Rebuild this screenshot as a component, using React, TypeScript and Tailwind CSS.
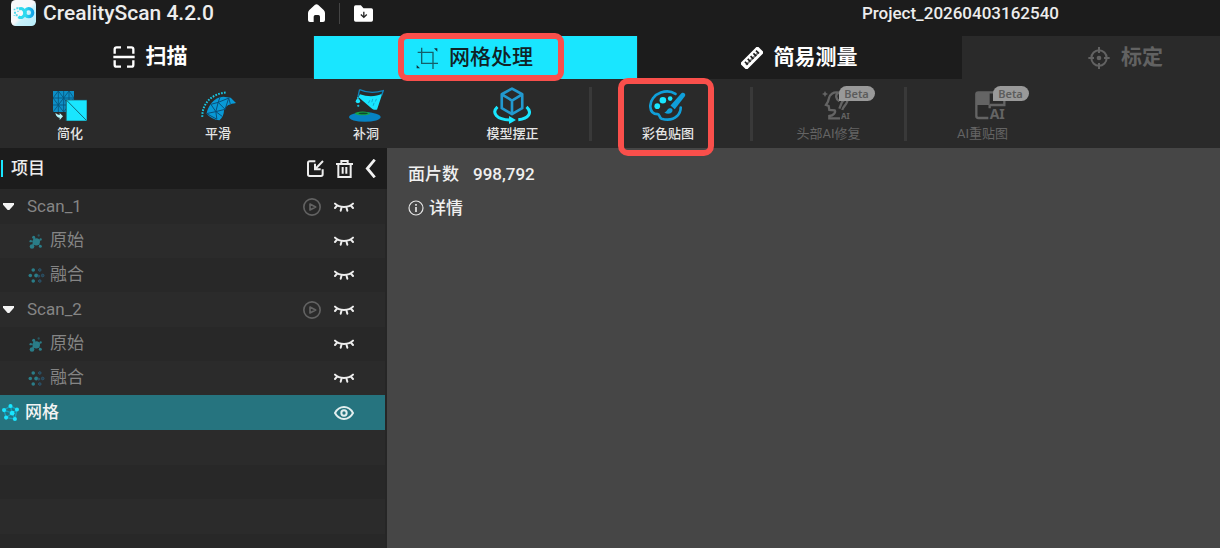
import type { ReactNode } from 'react';

const ScanIcon = () => (
  <svg viewBox="0 0 64 66" className="h-[22px] w-[22px]" fill="none" stroke="currentColor" strokeWidth="7" aria-hidden="true">
    <path d="M4 23V10q0-6 6-6h13M41 4h13q6 0 6 6v13M4 43v13q0 6 6 6h13M41 62h13q6 0 6-6V43M0 33h64" />
  </svg>
);

const CropIcon = () => (
  <svg viewBox="0 0 66 66" className="h-[22px] w-[22px]" fill="none" stroke="#14606b" strokeWidth="4" aria-hidden="true">
    <path d="M17 2v47h49M5 16h46v50" />
    <path d="M54 4h10v10zM2 54v10h10z" fill="#12303a" stroke="none" />
  </svg>
);

const RulerIcon = () => (
  <svg viewBox="0 0 66 66" className="h-[22px] w-[22px]" aria-hidden="true">
    <g transform="rotate(-45 33 33)">
      <rect x="-4" y="19" width="74" height="28" rx="4" fill="currentColor" />
      <path d="M6 32h54v6H6z" fill="#777" />
      <path d="M10 26v12M22 26v12M34 26v12M46 26v12M57 26v12" stroke="#1c1c1c" strokeWidth="5" />
    </g>
  </svg>
);

const TargetIcon = () => (
  <svg viewBox="0 0 64 66" className="h-[22px] w-[22px]" fill="none" stroke="currentColor" strokeWidth="6" aria-hidden="true">
    <circle cx="32" cy="33" r="23" />
    <path d="M32 0v18M32 48v18M0 33h17M47 33h17" strokeWidth="6" />
    <circle cx="32" cy="33" r="7" fill="currentColor" stroke="none" />
  </svg>
);

const SimplifyIcon = () => (
  <svg viewBox="0 0 102 90" className="h-[30px] w-[34px]" aria-hidden="true">
    <rect width="63" height="63" fill="#0d8fc6" />
    <path
      d="M0 21h63M0 42h63M16 0 0 21l16 21L0 63M16 0l16 21-16 21 16 21M48 0 32 21l16 21-16 21M48 0l15 21-15 21 15 21M16 0v63M48 0v63M32 0v63"
      fill="none"
      stroke="#07567c"
      strokeWidth="2.5"
    />
    <rect x="38" y="26" width="64" height="64" fill="#23505c" />
    <rect x="41" y="28" width="60" height="61" fill="#19e6ff" />
    <path d="M41 28l60 61" stroke="#146b7a" strokeWidth="3" />
    <path d="M7 66c2 10 7 14 13 14v7l10-11-10-10v6c-4 0-7-2-13-6z" fill="#b4f5fb" />
  </svg>
);

const SmoothIcon = () => (
  <svg viewBox="0 0 106 90" className="h-[30px] w-[35px]" fill="none" aria-hidden="true">
    <path d="M4 78C3 38 32 7 78 4" stroke="#19c9e6" strokeWidth="6" strokeDasharray="5 4" />
    <path d="M17 68C20 48 38 18 68 17l22 3 16 16c-18 3-31 7-36 21-1 15-5 24-14 31-14 0-30-8-39-20z" fill="#0899d6" />
    <path d="M17 68l28-6 28-7M30 40l15 22 3 23M30 40l22-6 32-13M52 34l-7 28M52 34l21 21M52 34l6-17M84 21l-11 34M84 21l5 19M45 62l20 15M17 68l31 17" stroke="#0a4e78" strokeWidth="3" />
  </svg>
);

const FillHoleIcon = () => (
  <svg viewBox="0 0 106 100" className="h-[33px] w-[35px]" aria-hidden="true">
    <ellipse cx="48" cy="85" rx="48" ry="14.500" fill="#0683c3" />
    <ellipse cx="41" cy="74" rx="23" ry="5.500" fill="#15a64a" />
    <ellipse cx="43" cy="74" rx="14" ry="2.500" fill="#0d4b2c" />
    <path d="M33 16c24 8 48 8 68-2L85 62c-6 3-12 0-17-4L29 25z" fill="#19e6ff" />
    <path d="M32 2c22 10 46 11 72 3l-5 14M32 2l-5 22" fill="none" stroke="#0f84bb" strokeWidth="4" />
    <path d="M63 34l-4 9M72 30l-3 10M76 42l-3 9M83 30l-3 8" stroke="#0c9fc6" strokeWidth="2.500" />
    <circle cx="27" cy="37" r="6.500" fill="#19e6ff" />
    <circle cx="28" cy="51" r="3.500" fill="#19b6d2" />
    <path d="M27 24v12" stroke="#19e6ff" strokeWidth="4" />
  </svg>
);

const AlignIcon = () => (
  <svg viewBox="0 0 114 112" className="h-[37px] w-[38px]" fill="none" aria-hidden="true">
    <path d="M57 5l31 17v42L57 82 26 64V22zM26 22l31 19 31-19M57 41v41" stroke="#2299cf" strokeWidth="8" strokeLinejoin="round" />
    <path d="M13 60C-6 78 10 98 50 100M101 60c19 18 6 36-25 39" stroke="#19e6ff" strokeWidth="9" />
    <path d="M48 88l21 12-21 12z" fill="#19e6ff" />
  </svg>
);

const PaletteIcon = () => (
  <svg viewBox="0 0 112 92" className="h-[31px] w-[37px]" fill="none" strokeLinecap="round" aria-hidden="true">
    <path d="M80 11C68 3 50 2 36 7 16 14 3 31 4 50c1 14 9 22 22 22 7 0 4 11 12 14 17 5 36 2 47-8 8-8 11-16 11-26" stroke="#109fd9" strokeWidth="8" />
    <path d="M98 9c8-5 15 3 10 10L78 57l-13-11z" fill="#109fd9" />
    <path d="M71 58c2 11-12 17-25 9 8-1 8-9 14-12 4-2 9-1 11 3z" fill="#109fd9" />
    <circle cx="25" cy="48" r="8.500" fill="#19e6ff" />
    <circle cx="42" cy="30" r="10" fill="#19e6ff" />
    <circle cx="64" cy="25" r="7" fill="#19e6ff" />
  </svg>
);

const HeadIcon = () => (
  <svg viewBox="0 0 90 90" className="h-[30px] w-[30px]" fill="none" stroke="currentColor" strokeWidth="7" aria-hidden="true">
    <path d="M9 0l3 6 6 3-6 3-3 6-3-6-6-3 6-3z" fill="currentColor" stroke="none" />
    <path d="M50 5C34 2 22 10 20 24l-2 8-6 10 8 3 2 12 16 1c4 5-3 16-16 17v7h32" />
    <path d="M50 5c-12 6-8 20 2 26M50 5c18-2 31 12 25 28-3 10-12 14-14 24M64 12c5 8 3 16-4 21l-8 20" />
    <text x="57" y="84" fill="currentColor" stroke="none" className="font-['Noto_Sans'] text-[24px] font-bold">AI</text>
  </svg>
);

const RetextureIcon = () => (
  <svg viewBox="0 0 96 96" className="h-8 w-8" fill="none" stroke="currentColor" strokeWidth="7" aria-hidden="true">
    <path d="M40 84H10q-6 0-6-6V13q0-6 6-6h72q6 0 6 6v32H44M44 45v10" />
    <path d="M4 7h40v38H4z" fill="currentColor" stroke="none" />
    <text x="44" y="87" fill="currentColor" stroke="none" className="font-['Noto_Sans'] text-[42px] font-bold">AI</text>
  </svg>
);

const ClosedEye = () => (
  <svg viewBox="0 0 60 30" className="h-[10px] w-[20px]" fill="none" stroke="#ededed" strokeWidth="6" strokeLinecap="round" aria-hidden="true">
    <path d="M3 5c13 13 41 13 54 0M10 10l-7 8M50 10l7 8M23 15l-3 11M37 15l3 11" />
  </svg>
);

const OpenEye = () => (
  <svg viewBox="0 0 60 42" className="h-[14px] w-[20px]" fill="none" stroke="#e2eeee" strokeWidth="6" aria-hidden="true">
    <path d="M3 21C16-3 44-3 57 21 44 45 16 45 3 21z" />
    <circle cx="30" cy="21" r="8" />
  </svg>
);

const PlayIcon = () => (
  <svg viewBox="0 0 54 54" className="h-[18px] w-[18px]" fill="none" stroke="#626262" strokeWidth="5" strokeLinejoin="round" aria-hidden="true">
    <circle cx="27" cy="27" r="24.500" />
    <path d="M21 18l17 9-17 9z" />
  </svg>
);

const RawIcon = () => (
  <svg viewBox="0 0 42 44" className="h-[15px] w-[14px]" fill="#2a7d88" aria-hidden="true">
    <circle cx="22" cy="23" r="11" />
    <circle cx="9" cy="37" r="7" />
    <circle cx="14" cy="9" r="4.500" />
    <circle cx="5" cy="21" r="3.500" />
    <circle cx="35" cy="16" r="3.500" />
    <circle cx="34" cy="36" r="4.500" />
    <circle cx="29" cy="4" r="3.500" fill="#285660" />
    <path d="M9 37l13-14L14 9M22 23l13-7M22 23l12 13M5 21h17" stroke="#2a7d88" strokeWidth="3" />
  </svg>
);

const FusedIcon = () => (
  <svg viewBox="0 0 50 46" className="h-[15px] w-[17px]" aria-hidden="true">
    <g fill="#2a7d88">
      <circle cx="15" cy="6" r="5.500" />
      <circle cx="6" cy="23" r="5.500" />
      <circle cx="24" cy="23" r="6" />
      <circle cx="15" cy="40" r="5.500" />
    </g>
    <g fill="#28404f" stroke="#2b566e" strokeWidth="3">
      <circle cx="35" cy="6" r="4" />
      <circle cx="44" cy="23" r="4" />
      <circle cx="32" cy="25" r="3" />
      <circle cx="35" cy="40" r="4" />
    </g>
  </svg>
);

const MeshIcon = () => (
  <svg viewBox="0 0 50 50" className="h-[17px] w-[17px]" fill="#19e6ff" aria-hidden="true">
    <path d="M6 18L25 6l19 10-6 28-26-4zM6 18l24 9 14-11M25 6l5 21 8 17M12 40l18-13" fill="none" stroke="#189fbd" strokeWidth="4" />
    <circle cx="25" cy="6" r="6" />
    <circle cx="6" cy="18" r="6" />
    <circle cx="44" cy="16" r="6" />
    <circle cx="30" cy="27" r="7" />
    <circle cx="12" cy="40" r="6" />
    <circle cx="38" cy="44" r="6" />
  </svg>
);

const Logo = () => (
  <svg viewBox="0 0 75 78" className="h-[26px] w-[25px] shrink-0" aria-hidden="true">
    <defs>
      <linearGradient id="plate" x1="0" y1="0" x2="1" y2="1">
        <stop offset="0.5" stopColor="#f8f8fa" />
        <stop offset="0.6" stopColor="#c9f1fb" />
        <stop offset="1" stopColor="#b6edfa" />
      </linearGradient>
      <linearGradient id="loop" x1="0" x2="1">
        <stop offset="0" stopColor="#2fe3f0" />
        <stop offset="1" stopColor="#13a3e6" />
      </linearGradient>
    </defs>
    <rect width="75" height="78" rx="14" fill="url(#plate)" />
    <circle cx="53" cy="38" r="12" fill="none" stroke="url(#loop)" strokeWidth="10" />
    <path d="M24 27c12-5 14 4 20 14M22 50c9 6 15 2 20-8" fill="none" stroke="#2fd9ee" strokeWidth="9" />
    <path d="M8 26h5v5H8zM16 22h6v6h-6zM9 35h6v6H9zM14 43h6v6h-6zM8 45h3v3H8zM19 32h4v4h-4z" fill="#4fd9ea" />
  </svg>
);

const HomeIcon = () => (
  <svg viewBox="0 0 51 54" className="h-[18px] w-[17px]" aria-hidden="true">
    <path d="M21 2q4.500-3 9 0l17 16q4 4 4 9v21q0 6-6 6h-9V38q0-5-5-5h-9q-5 0-5 5v16H6q-6 0-6-6V27q0-5 4-9z" fill="#fff" />
  </svg>
);

const FolderIcon = () => (
  <svg viewBox="0 0 58 50" className="h-[17px] w-[19px]" fill="none" aria-hidden="true">
    <path d="M0 5q0-5 5-5h16l8 9h24q5 0 5 5v31q0 5-5 5H5q-5 0-5-5z" fill="#fff" />
    <path d="M30 20v16M21 28l9 9 9-9" stroke="#222" strokeWidth="4" />
  </svg>
);

type TabProps = { label: string; icon: ReactNode; className: string; children?: ReactNode };

const Tab = ({ label, icon, className, children }: TabProps) => (
  <button type="button" className={`relative flex items-center text-[21px] ${className}`}>
    {icon}
    <span>{label}</span>
    {children}
  </button>
);

type ToolProps = { label: string; icon: ReactNode; className?: string; disabled?: boolean; beta?: boolean; children?: ReactNode };

const Tool = ({ label, icon, className = '', disabled, beta, children }: ToolProps) => (
  <div className={`flex h-full justify-center ${className}`}>
    <button
      type="button"
      disabled={disabled}
      className={`relative flex h-full flex-col items-center text-[13px] leading-5 whitespace-nowrap ${disabled ? 'text-[#646464]' : 'font-medium text-[#e6e6e6]'}`}
    >
      <span className={`flex h-[37px] items-center justify-center ${beta ? 'pl-4' : ''}`}>{icon}</span>
      <span>{label}</span>
      {beta && (
        <span className="absolute top-[-1px] left-1/2 ml-[10px] flex h-[15px] w-9 items-center justify-center rounded-lg rounded-bl-none bg-[#999] font-['Noto_Sans'] text-[11px] font-semibold text-[#5c5c5c]">
          Beta
        </span>
      )}
      {children}
    </button>
  </div>
);

const Divider = () => <div className="mt-0 h-[54px] w-[3px] bg-[#393939]" />;

const EyeButton = ({ name, open }: { name: string; open?: boolean }) => (
  <button type="button" aria-label={name} className="flex h-5 w-5 items-center justify-center">
    {open ? <OpenEye /> : <ClosedEye />}
  </button>
);

const ScanRow = ({ name, className }: { name: string; className: string }) => (
  <div className={`flex h-[35px] items-center pr-[31px] pl-[3px] ${className}`}>
    <button type="button" className="flex items-center gap-[13px] text-[#858585]">
      <svg viewBox="0 0 33 21" className="h-[7px] w-[11px]" aria-hidden="true">
        <path d="M0 0h33v5L19 21h-5L0 5z" fill="#f4f4f4" />
      </svg>
      <span>{name}</span>
    </button>
    <button type="button" aria-label={name} className="mr-[13px] ml-auto"><PlayIcon /></button>
    <EyeButton name={name} />
  </div>
);

const ChildRow = ({ name, icon, className }: { name: string; icon: ReactNode; className: string }) => (
  <div className={`flex h-[34px] items-center justify-between pr-[31px] pl-[27px] ${className}`}>
    <button type="button" className="flex items-center gap-[5px] text-[#858585]">
      <span className="flex w-[18px] justify-center">{icon}</span>
      <span>{name}</span>
    </button>
    <EyeButton name={name} />
  </div>
);

export default function App() {
  return (
    <div className="flex h-screen flex-col overflow-hidden bg-[#1c1c1c] font-['Roboto','Noto_Sans_CJK_SC',sans-serif] text-white">
      <header className="flex h-9 shrink-0 items-start pl-[11px]">
        <div className="flex w-[297px] items-center gap-[7px]">
          <Logo />
          <h1 className="text-[21px] leading-[26px] font-medium whitespace-nowrap text-[#ededed]">CrealityScan 4.2.0</h1>
        </div>
        <div className="flex h-[26px] items-center">
          <button type="button" aria-label="Home"><HomeIcon /></button>
          <div className="mx-[14px] h-[21px] w-px bg-[#444]" />
          <button type="button" aria-label="Open folder"><FolderIcon /></button>
        </div>
        <div className="mr-[161px] ml-auto text-[17px] leading-[26px] font-medium text-[#ededed]">Project_20260403162540</div>
      </header>

      <nav className="grid h-[43px] shrink-0 grid-cols-[313fr_325fr_324fr_258fr]">
        <Tab label="扫描" icon={<ScanIcon />} className="justify-center gap-[11px] border-b border-[#2a2a2a] pr-[13px] font-bold" />
        <Tab label="网格处理" icon={<CropIcon />} className="justify-center gap-[11px] border-x border-[#2a2a2a] bg-[#19e6ff] pr-[2px] font-medium text-[#102226]">
          <span className="pointer-events-none absolute top-[-3px] left-1/2 z-10 ml-[-78px] h-12 w-[166px] rounded-[9px] border-6 border-[#f94f4b]" />
        </Tab>
        <Tab label="简易测量" icon={<RulerIcon />} className="justify-center gap-[11px] pr-[2px] font-bold" />
        <Tab label="标定" icon={<TargetIcon />} className="gap-[11px] bg-[#2a2a2a] pl-[126px] font-bold text-[#626262]" />
      </nav>

      <div className="grid h-[69px] shrink-0 grid-cols-[140fr_156fr_140fr_153fr_3px_158fr_3px_151fr_3px_151fr_162fr] bg-[#2a2a2a] pt-2">
        <Tool label="简化" icon={<SimplifyIcon />} />
        <Tool label="平滑" icon={<SmoothIcon />} />
        <Tool label="补洞" icon={<FillHoleIcon />} />
        <Tool label="模型摆正" icon={<AlignIcon />} />
        <Divider />
        <Tool label="彩色贴图" icon={<PaletteIcon />} className="pr-[6px]">
          <span className="pointer-events-none absolute top-[-9px] left-1/2 z-10 ml-[-50px] h-[78px] w-24 rounded-[10px] border-6 border-[#f94f4b]" />
        </Tool>
        <Divider />
        <Tool label="头部AI修复" icon={<HeadIcon />} disabled beta />
        <Divider />
        <Tool label="AI重贴图" icon={<RetextureIcon />} disabled beta />
      </div>

      <div className="flex min-h-0 flex-1">
        <aside className="w-[387px] shrink-0 overflow-hidden bg-[#262626] text-[17px]">
          <div className="flex h-[41px] items-center bg-[#1c1c1c] pr-[11px] pl-px">
            <div className="h-[17px] w-[2px] bg-[#19e6ff]" />
            <h2 className="ml-2 font-medium text-[#ededed]">项目</h2>
            <div className="ml-auto flex items-center gap-3">
              <button type="button" aria-label="Import">
                <svg viewBox="0 0 51 51" className="h-[17px] w-[17px]" fill="none" stroke="#ededed" strokeWidth="6" aria-hidden="true">
                  <path d="M25 4H8q-5 0-5 5v34q0 5 5 5h34q5 0 5-5V28M48 3L25 27M24 11v17h17" />
                </svg>
              </button>
              <button type="button" aria-label="Delete">
                <svg viewBox="0 0 51 54" className="h-[18px] w-[17px]" fill="none" stroke="#ededed" strokeWidth="6" aria-hidden="true">
                  <path d="M0 12h51M16 11V3h19v8M7 12v39h37V12M20 21v20M31 21v20" />
                </svg>
              </button>
              <button type="button" aria-label="Collapse">
                <svg viewBox="0 0 30 54" className="h-[19px] w-[11px]" fill="none" stroke="#f2f2f2" strokeWidth="8" aria-hidden="true">
                  <path d="M27 2L6 27l21 25" />
                </svg>
              </button>
            </div>
          </div>
          <div className="mr-[2px]">
            <ScanRow name="Scan_1" className="bg-[#282828]" />
            <ChildRow name="原始" icon={<RawIcon />} className="bg-[#2b2b2b]" />
            <ChildRow name="融合" icon={<FusedIcon />} className="bg-[#282828]" />
            <ScanRow name="Scan_2" className="bg-[#2b2b2b]" />
            <ChildRow name="原始" icon={<RawIcon />} className="bg-[#282828]" />
            <ChildRow name="融合" icon={<FusedIcon />} className="bg-[#2b2b2b]" />
            <div className="flex h-[35px] items-center justify-between bg-[#26747f] pr-[31px] pl-[2px]">
              <button type="button" className="flex items-center gap-[6px] font-medium text-[#f4f4f4]">
                <MeshIcon />
                <span>网格</span>
              </button>
              <EyeButton name="网格" open />
            </div>
            <div className="h-[35px] bg-[#2b2b2b]" />
            <div className="h-[34px] bg-[#282828]" />
            <div className="h-[35px] bg-[#2b2b2b]" />
            <div className="h-[34px] bg-[#282828]" />
          </div>
        </aside>

        <main className="flex-1 bg-[#464646] pt-[9px] pl-[21px] text-[17px] leading-[34px] font-medium text-[#f0f0f0]">
          <p className="flex gap-[14px]">
            <span>面片数</span>
            <span>998,792</span>
          </p>
          <button type="button" className="flex items-center gap-[5px]">
            <svg viewBox="0 0 48 48" className="h-4 w-4" fill="none" stroke="#e6e6e6" strokeWidth="3.500" aria-hidden="true">
              <circle cx="24" cy="24" r="21" />
              <path d="M24 21v15M24 12v5" strokeWidth="5" />
            </svg>
            <span>详情</span>
          </button>
        </main>
      </div>
    </div>
  );
}
